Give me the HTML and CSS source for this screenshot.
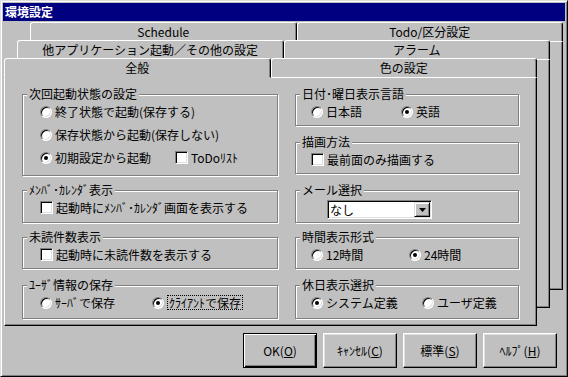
FILE: index.html
```html
<!DOCTYPE html>
<html lang="ja">
<head>
  <meta charset="UTF-8">
  <title>環境設定</title>
  <link rel="stylesheet" href="styles.css">
</head>
<body>
  <div class="window">
    <div class="titlebar">環境設定</div>

    <div class="sheets">
      <!-- back rows of the tab control -->
      <div class="sheet sheet-back2">
        <div class="tabs">
          <div class="tab">Schedule</div>
          <div class="tab">Todo/区分設定</div>
        </div>
        <div class="sheet-body"></div>
      </div>

      <div class="sheet sheet-back1">
        <div class="tabs">
          <div class="tab">他アプリケーション起動／その他の設定</div>
          <div class="tab">アラーム</div>
        </div>
        <div class="sheet-body"></div>
      </div>

      <div class="sheet sheet-front">
        <div class="tabs">
          <div class="tab active">全般</div>
          <div class="tab">色の設定</div>
        </div>
        <div class="sheet-body page">
          <div class="col col-left">
            <div class="group g-startup">
              <div class="group-title">次回起動状態の設定</div>
              <div class="row"><span class="radio"></span>終了状態で起動(保存する)</div>
              <div class="row"><span class="radio"></span>保存状態から起動(保存しない)</div>
              <div class="row">
                <span class="opt opt-init"><span class="radio checked"></span>初期設定から起動</span>
                <span class="opt"><span class="check"></span>ToDoﾘｽﾄ</span>
              </div>
            </div>

            <div class="group g-member">
              <div class="group-title">ﾒﾝﾊﾞ･ｶﾚﾝﾀﾞ表示</div>
              <div class="row"><span class="check"></span>起動時にﾒﾝﾊﾞ･ｶﾚﾝﾀﾞ画面を表示する</div>
            </div>

            <div class="group g-unread">
              <div class="group-title">未読件数表示</div>
              <div class="row"><span class="check"></span>起動時に未読件数を表示する</div>
            </div>

            <div class="group g-user">
              <div class="group-title">ﾕｰｻﾞ情報の保存</div>
              <div class="row">
                <span class="opt opt-server"><span class="radio"></span>ｻｰﾊﾞで保存</span>
                <span class="opt"><span class="radio checked"></span><span class="focus">ｸﾗｲｱﾝﾄで保存</span></span>
              </div>
            </div>
          </div>

          <div class="col col-right">
            <div class="group g-lang">
              <div class="group-title">日付･曜日表示言語</div>
              <div class="row">
                <span class="opt opt-ja"><span class="radio"></span>日本語</span>
                <span class="opt"><span class="radio checked"></span>英語</span>
              </div>
            </div>

            <div class="group g-draw">
              <div class="group-title">描画方法</div>
              <div class="row"><span class="check"></span>最前面のみ描画する</div>
            </div>

            <div class="group g-mail">
              <div class="group-title">メール選択</div>
              <div class="combo">
                <span class="combo-text">なし</span>
                <span class="combo-btn">
                  <svg width="7" height="4" viewBox="0 0 7 4"><polygon points="0,0 7,0 3.5,4" fill="#000"/></svg>
                </span>
              </div>
            </div>

            <div class="group g-time">
              <div class="group-title">時間表示形式</div>
              <div class="row">
                <span class="opt opt-12"><span class="radio"></span>12時間</span>
                <span class="opt"><span class="radio checked"></span>24時間</span>
              </div>
            </div>

            <div class="group g-holiday">
              <div class="group-title">休日表示選択</div>
              <div class="row">
                <span class="opt opt-system"><span class="radio checked"></span>システム定義</span>
                <span class="opt"><span class="radio"></span>ユーザ定義</span>
              </div>
            </div>
          </div>
        </div>
      </div>
    </div>

    <div class="buttons">
      <button class="btn default">OK(<u>O</u>)</button>
      <button class="btn">ｷｬﾝｾﾙ(<u>C</u>)</button>
      <button class="btn">標準(<u>S</u>)</button>
      <button class="btn">ﾍﾙﾌﾟ(<u>H</u>)</button>
    </div>
  </div>
</body>
</html>
```

FILE: styles.css
```css
body {
  margin: 0;
  font-family: "Noto Sans CJK JP", "Noto Sans", sans-serif;
  font-size: 12px;
  color: #000;
  background: #c0c0c0;
}
.window {
  box-sizing: border-box;
  width: 568px;
  height: 377px;
  padding: 2px;
  background: #c0c0c0;
  border: 1px solid;
  border-color: #dfdfdf #000 #000 #dfdfdf;
  box-shadow: inset 1px 1px #fff, inset -1px -1px #808080;
}
.titlebar {
  height: 18px;
  line-height: 18px;
  padding-left: 2px;
  background: #000080;
  color: #fff;
  font-weight: bold;
}

/* stacked tab rows */
.sheets {
  display: grid;
  margin: 1px 0 0 1px;
}
.sheet {
  grid-area: 1 / 1;
  width: 533px;
  height: 268px;
  display: flex;
  flex-direction: column;
}
.sheet-back2 {
  margin-left: 26px;
}
.sheet-back1 {
  margin: 18px 0 0 13px;
}
.sheet-front {
  margin-top: 36px;
}
.tabs {
  display: flex;
  height: 20px;
}
.tab {
  flex: 1;
  box-sizing: border-box;
  border: 1px solid;
  border-color: #fff #000 #fff #fff;
  border-radius: 3px 3px 0 0;
  box-shadow: inset -1px 0 #808080;
  background: #c0c0c0;
  text-align: center;
  line-height: 18px;
  white-space: nowrap;
}
.tab.active {
  border-bottom-color: #c0c0c0;
}
.sheet-body {
  flex: 1;
  box-sizing: border-box;
  background: #c0c0c0;
  border: 1px solid;
  border-top: 0;
  border-color: #c0c0c0 #000 #000 #fff;
  box-shadow: inset -1px -1px #808080;
}

/* page content */
.page {
  display: flex;
  gap: 17px;
  padding: 16px 0 0 17px;
}
.col {
  display: flex;
  flex-direction: column;
}
.col-left {
  width: 256px;
}
.col-right {
  width: 224px;
}
.group {
  box-sizing: border-box;
  border: 1px solid #808080;
  box-shadow: inset 1px 1px #fff, 1px 1px #fff;
  padding-left: 17px;
}
.col-right .group {
  padding-left: 15px;
}
.group-title {
  display: table;
  margin: -8px 0 -1px -13px;
  padding: 0 2px;
  line-height: 14px;
  background: #c0c0c0;
  white-space: nowrap;
}
.col-right .group-title {
  margin-left: -11px;
}
.g-startup { height: 82px; }
.g-member { height: 33px; margin-top: 14px; }
.g-unread { height: 32px; margin-top: 14px; }
.g-user { height: 34px; margin-top: 16px; }
.g-lang { height: 32px; }
.g-draw { height: 32px; margin-top: 16px; }
.g-mail { height: 33px; margin-top: 16px; }
.g-time { height: 32px; margin-top: 14px; }
.g-holiday { height: 34px; margin-top: 16px; }

.row {
  display: flex;
  align-items: center;
  height: 23px;
  white-space: nowrap;
}
.opt {
  display: flex;
  align-items: center;
}
.opt-init { width: 135px; }
.opt-server { width: 112px; }
.opt-ja { width: 90px; }
.opt-12 { width: 98px; }
.opt-system { width: 111px; }

.radio {
  flex: none;
  box-sizing: border-box;
  width: 12px;
  height: 12px;
  margin-right: 3px;
  display: grid;
  place-items: center;
  border-radius: 50%;
  background: #fff;
  border: 1px solid;
  border-color: #808080 #fff #fff #808080;
  box-shadow: inset 1px 1px #000, inset -1px -1px #dfdfdf;
}
.radio.checked::after {
  content: "";
  width: 4px;
  height: 4px;
  border-radius: 50%;
  background: #000;
}
.check {
  flex: none;
  box-sizing: border-box;
  width: 13px;
  height: 13px;
  margin-right: 3px;
  background: #fff;
  border: 1px solid;
  border-color: #808080 #fff #fff #808080;
  box-shadow: inset 1px 1px #000, inset -1px -1px #dfdfdf;
}
.focus {
  border: 1px dotted #000;
  padding: 0 1px;
  line-height: 13px;
}

.combo {
  display: flex;
  box-sizing: border-box;
  width: 105px;
  height: 19px;
  margin: 4px 0 0 16px;
  padding: 1px;
  background: #fff;
  border: 1px solid;
  border-color: #808080 #fff #fff #808080;
  box-shadow: inset 1px 1px #000, inset -1px -1px #dfdfdf;
}
.combo-text {
  flex: 1;
  padding-left: 1px;
  line-height: 15px;
}
.combo-btn {
  box-sizing: border-box;
  width: 16px;
  display: grid;
  place-items: center;
  background: #c0c0c0;
  border: 1px solid;
  border-color: #dfdfdf #000 #000 #dfdfdf;
  box-shadow: inset 1px 1px #fff, inset -1px -1px #808080;
}
.combo-btn svg {
  display: block;
}

/* dialog buttons */
.buttons {
  display: flex;
  justify-content: flex-end;
  gap: 6px;
  margin-top: 7px;
  padding-right: 8px;
}
.btn {
  box-sizing: border-box;
  width: 74px;
  height: 35px;
  padding: 0;
  font: inherit;
  color: #000;
  background: #c0c0c0;
  border: 1px solid;
  border-color: #fff #000 #000 #fff;
  box-shadow: inset -1px -1px #808080, inset 1px 1px #dfdfdf;
}
.btn.default {
  border-color: #000;
  box-shadow: inset 1px 1px #fff, inset -1px -1px #000, inset -2px -2px #808080;
}
```
